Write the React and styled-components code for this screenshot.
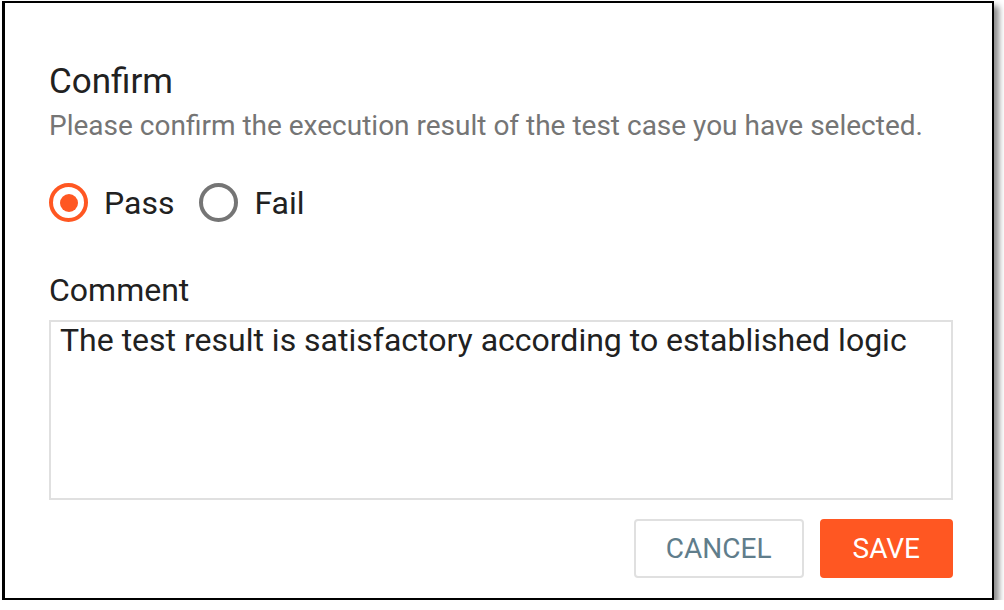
import { useState } from "react";
import styled, { createGlobalStyle } from "styled-components";

const GlobalStyle = createGlobalStyle`
  html, body {
    margin: 0;
    padding: 0;
    background: #ffffff;
    font-family: Roboto, "Liberation Sans", Arial, sans-serif;
  }
`;

const App = () => {
  const [result, setResult] = useState("pass");
  const [comment, setComment] = useState(
    "The test result is satisfactory according to established logic"
  );

  return (
    <>
      <GlobalStyle />
      <Page>
        <Dialog>
          <Title>Confirm</Title>
          <Subtitle>
            Please confirm the execution result of the test case you have
            selected.
          </Subtitle>

          <RadioGroup>
            <RadioLabel onClick={() => setResult("pass")}>
              <Radio checked={result === "pass"} />
              Pass
            </RadioLabel>
            <RadioLabel onClick={() => setResult("fail")}>
              <Radio checked={result === "fail"} />
              Fail
            </RadioLabel>
          </RadioGroup>

          <FieldLabel>Comment</FieldLabel>
          <TextArea
            value={comment}
            onChange={(e) => setComment(e.target.value)}
          />

          <Actions>
            <Button>CANCEL</Button>
            <Button primary>SAVE</Button>
          </Actions>
        </Dialog>
      </Page>
    </>
  );
};

export default App;

const Page = styled.div`
  padding: 1px 0 0 2px;
`;

const Dialog = styled.div`
  box-sizing: border-box;
  width: 992px;
  height: 599px;
  border: 2px solid #000;
  border-left-width: 3px;
  background: #fff;
  box-shadow: 5px 5px 6px rgba(0, 0, 0, 0.45);
  padding: 57px 40px 0 44px;
  display: flex;
  flex-direction: column;
`;

const Title = styled.h2`
  margin: 0;
  font-size: 35px;
  font-weight: 400;
  line-height: 44px;
  color: #212121;
`;

const Subtitle = styled.p`
  margin: 4px 0 0;
  font-size: 28px;
  line-height: 36px;
  color: #757575;
`;

const RadioGroup = styled.div`
  display: flex;
  align-items: center;
  gap: 25px;
  margin-top: 39px;
`;

const RadioLabel = styled.label`
  display: flex;
  align-items: center;
  gap: 16px;
  font-size: 32px;
  color: #212121;
  cursor: pointer;
`;

const Radio = styled.span`
  box-sizing: border-box;
  width: 39px;
  height: 39px;
  border-radius: 50%;
  border: 4px solid ${(p) => (p.checked ? "#ff5722" : "#757575")};
  display: grid;
  place-items: center;

  &::after {
    content: "";
    width: 18px;
    height: 18px;
    border-radius: 50%;
    background: ${(p) => (p.checked ? "#ff5722" : "transparent")};
  }
`;

const FieldLabel = styled.div`
  margin-top: 48px;
  font-size: 32px;
  line-height: 40px;
  color: #212121;
`;

const TextArea = styled.textarea`
  box-sizing: border-box;
  margin-top: 10px;
  width: 904px;
  height: 180px;
  border: 2px solid #e0e0e0;
  padding: 0 9px;
  resize: none;
  font-family: Roboto, "Liberation Sans", Arial, sans-serif;
  font-size: 32px;
  line-height: 36px;
  color: #212121;
  outline: none;
`;

const Actions = styled.div`
  display: flex;
  justify-content: flex-end;
  gap: 16px;
  width: 904px;
  margin-top: 19px;
`;

const Button = styled.button`
  box-sizing: border-box;
  height: 59px;
  padding: 0 ${(p) => (p.primary ? "31px" : "30px")};
  border-radius: 4px;
  border: 2px solid ${(p) => (p.primary ? "#ff5722" : "#e0e0e0")};
  background: ${(p) => (p.primary ? "#ff5722" : "#fff")};
  color: ${(p) => (p.primary ? "#fff" : "#607d8b")};
  font-family: Roboto, "Liberation Sans", Arial, sans-serif;
  font-size: 28px;
  font-weight: 400;
  cursor: pointer;
`;
